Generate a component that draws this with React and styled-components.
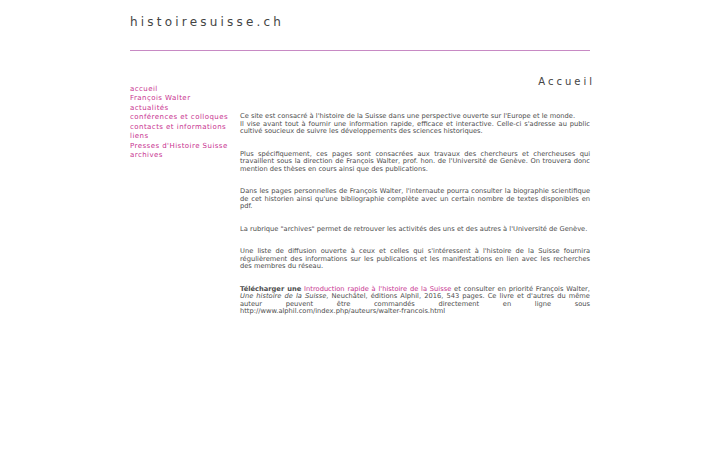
import React from "react";
import styled, { createGlobalStyle } from "styled-components";

const Global = createGlobalStyle`
  html, body { margin: 0; padding: 0; background: #fff; }
  body { font-family: "DejaVu Sans", Verdana, sans-serif; color: #4d4d4d; }
`;

const Page = styled.div`
  width: 460px;
  margin: 0 auto;
`;

const Header = styled.header`
  padding-top: 14px;
  height: 36px;
  border-bottom: 1px solid #c88ac4;
  box-sizing: content-box;
`;

const SiteTitle = styled.h1`
  margin: 0;
  font-weight: normal;
  font-size: 12px;
  letter-spacing: 3.2px;
  color: #444;
  line-height: 16px;
`;

const Body = styled.div`
  display: flex;
  padding-top: 24px;
`;

const Nav = styled.nav`
  width: 110px;
  flex: none;
  padding-top: 10px;
  display: flex;
  flex-direction: column;
`;

const NavLink = styled.a`
  color: #c8328f;
  text-decoration: none;
  font-size: 7px;
  letter-spacing: 0.45px;
  line-height: 9.45px;
  white-space: nowrap;
`;

const Main = styled.main`
  flex: 1;
  min-width: 0;
`;

const PageTitle = styled.h2`
  margin: 0 -5px 0 0;
  font-weight: normal;
  font-size: 10px;
  letter-spacing: 3px;
  text-align: right;
  color: #444;
  line-height: 14px;
`;

const Content = styled.div`
  padding-top: 24px;
  font-size: 6.7px;
  line-height: 7.5px;
  text-align: justify;
`;

const Para = styled.p`
  margin: 0 0 15px 0;
`;

const Pink = styled.a`
  color: #c8328f;
  text-decoration: none;
`;

const nav = [
  "accueil",
  "François Walter",
  "actualités",
  "conférences et colloques",
  "contacts et informations",
  "liens",
  "Presses d'Histoire Suisse",
  "archives",
];

export default function App() {
  return (
    <>
      <Global />
      <Page>
        <Header>
          <SiteTitle>histoiresuisse.ch</SiteTitle>
        </Header>
        <Body>
          <Nav>
            {nav.map((n) => (
              <NavLink key={n} href="#">{n}</NavLink>
            ))}
          </Nav>
          <Main>
            <PageTitle>Accueil</PageTitle>
            <Content>
              <Para>
                Ce site est consacré à l'histoire de la Suisse dans une perspective ouverte sur l'Europe et le monde.
                <br />
                Il vise avant tout à fournir une information rapide, efficace et interactive. Celle-ci s'adresse au public cultivé soucieux de suivre les développements des sciences historiques.
              </Para>
              <Para>
                Plus spécifiquement, ces pages sont consacrées aux travaux des chercheurs et chercheuses qui travaillent sous la direction de François Walter, prof. hon. de l'Université de Genève. On trouvera donc mention des thèses en cours ainsi que des publications.
              </Para>
              <Para>
                Dans les pages personnelles de François Walter, l'internaute pourra consulter la biographie scientifique de cet historien ainsi qu'une bibliographie complète avec un certain nombre de textes disponibles en pdf.
              </Para>
              <Para>
                La rubrique "archives" permet de retrouver les activités des uns et des autres à l'Université de Genève.
              </Para>
              <Para>
                Une liste de diffusion ouverte à ceux et celles qui s'intéressent à l'histoire de la Suisse fournira régulièrement des informations sur les publications et les manifestations en lien avec les recherches des membres du réseau.
              </Para>
              <Para>
                <b>Télécharger une</b> <Pink href="#">Introduction rapide à l'histoire de la Suisse</Pink> et consulter en priorité François Walter, <i>Une histoire de la Suisse</i>, Neuchâtel, éditions Alphil, 2016, 543 pages. Ce livre et d'autres du même auteur peuvent être commandés directement en ligne sous http://www.alphil.com/index.php/auteurs/walter-francois.html
              </Para>
            </Content>
          </Main>
        </Body>
      </Page>
    </>
  );
}
